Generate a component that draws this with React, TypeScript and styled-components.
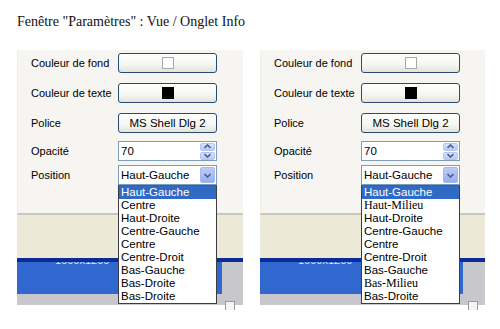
import React from "react";
import styled, { createGlobalStyle } from "styled-components";

const GlobalStyle = createGlobalStyle`
  html, body {
    margin: 0;
    padding: 0;
    background: #ffffff;
  }
  * {
    box-sizing: border-box;
  }
`;

const Page = styled.div`
  width: 500px;
  height: 329px;
  padding: 14px 0 0 17px;
  background: #ffffff;
  overflow: hidden;
`;

const Title = styled.div`
  font-family: "Liberation Serif", "Times New Roman", serif;
  font-size: 14px;
  line-height: 16px;
  color: #111;
  height: 16px;
  margin-bottom: 20px;
`;

const Panels = styled.div`
  display: flex;
  gap: 17px;
`;

const Panel = styled.div<{ $width: number }>`
  position: relative;
  width: ${({ $width }) => $width}px;
  display: flex;
  flex-direction: column;
  font-family: "Liberation Sans", Arial, sans-serif;
  font-size: 11px;
  color: #000;
`;

const Form = styled.div`
  height: 165px;
  padding: 3px 0 0 13px;
  background: #f6f5f1;
  border-left: 1px solid #eeede8;
  border-bottom: 2px solid #c9c7bd;
`;

const Row = styled.div<{ $after: number }>`
  display: flex;
  align-items: center;
  height: 20px;
  margin-bottom: ${({ $after }) => $after}px;
`;

const Label = styled.div`
  width: 87px;
  white-space: nowrap;
`;

const Control = styled.div`
  position: relative;
  width: 99px;
  height: 20px;
`;

const XpButton = styled.div`
  width: 100%;
  height: 100%;
  display: flex;
  align-items: center;
  justify-content: center;
  border: 1px solid #2a4a76;
  border-radius: 3px;
  background: linear-gradient(#ffffff 0%, #f5f5f1 60%, #e4e2d8 100%);
  font-size: 11.5px;
  color: #000;
`;

const Swatch = styled.span<{ $color: string; $edge: string }>`
  display: block;
  width: 12px;
  height: 12px;
  background: ${({ $color }) => $color};
  border: 1px solid ${({ $edge }) => $edge};
`;

const Field = styled.div`
  width: 100%;
  height: 100%;
  display: flex;
  align-items: center;
  justify-content: space-between;
  padding: 0 1px 0 2px;
  background: #ffffff;
  border: 1px solid #7f9db9;
  font-size: 11.5px;
`;

const SpinPair = styled.div`
  display: flex;
  flex-direction: column;
  gap: 1px;
`;

const ArrowButton = styled.div<{ $h: number }>`
  width: 15px;
  height: ${({ $h }) => $h}px;
  display: flex;
  align-items: center;
  justify-content: center;
  border: 1px solid #b3c6f3;
  border-radius: 2px;
  background: linear-gradient(#d6e1fc, #b7c9f7);
`;

const ComboButton = styled(ArrowButton)`
  background: linear-gradient(#bccbf8, #98aff0);
  border-color: #a6b8f0;
`;

const List = styled.div`
  position: absolute;
  top: 100%;
  left: 0;
  width: 100%;
  z-index: 5;
  background: #ffffff;
  border: 1px solid #3d3d3d;
  border-top-color: #5a5a5a;
`;

const Item = styled.div<{ $selected?: boolean; $serif?: boolean }>`
  height: 13px;
  line-height: 13px;
  padding-left: 2px;
  white-space: nowrap;
  font-family: ${({ $serif }) =>
    $serif ? `"Liberation Serif", "Times New Roman", serif` : `"Liberation Sans", Arial, sans-serif`};
  font-size: ${({ $serif }) => ($serif ? "12px" : "11.5px")};
  color: ${({ $selected }) => ($selected ? "#ffffff" : "#000000")};
  background: ${({ $selected }) => ($selected ? "#316ac5" : "transparent")};
`;

const Beige = styled.div`
  height: 43px;
  background: #ece9d8;
`;

const DarkLine = styled.div`
  height: 4px;
  background: #0b2c96;
`;

const Lower = styled.div`
  height: 43px;
  background: #c8c8cc;
`;

const BlueBox = styled.div<{ $width: number }>`
  width: ${({ $width }) => $width}px;
  height: 32px;
  overflow: hidden;
  background: #3168cf;
  padding-left: 38px;
`;

// resolution label, mostly hidden under the dark line as in the capture
const HiddenText = styled.div`
  margin-top: -8px;
  font-size: 11px;
  line-height: 12px;
  color: #dfe7f7;
`;

const Grip = styled.div<{ $right: number }>`
  position: absolute;
  right: ${({ $right }) => $right}px;
  bottom: -5px;
  width: 10px;
  height: 9px;
  background: #f4f4f4;
  border: 1px solid #9a9a9a;
  border-bottom: none;
`;

const Chevron = ({ up }: { up?: boolean }) => (
  <svg width="7" height="5" viewBox="0 0 7 5">
    <path
      d={up ? "M0.5 4 L3.5 1 L6.5 4" : "M0.5 1 L3.5 4 L6.5 1"}
      fill="none"
      stroke="#4d6185"
      strokeWidth="1.6"
    />
  </svg>
);

type Option = { text: string; serif?: boolean };

const leftOptions: Option[] = [
  { text: "Haut-Gauche" },
  { text: "Centre" },
  { text: "Haut-Droite" },
  { text: "Centre-Gauche" },
  { text: "Centre" },
  { text: "Centre-Droit" },
  { text: "Bas-Gauche" },
  { text: "Bas-Droite" },
  { text: "Bas-Droite" },
];

const rightOptions: Option[] = [
  { text: "Haut-Gauche" },
  { text: "Haut-Milieu", serif: true },
  { text: "Haut-Droite" },
  { text: "Centre-Gauche" },
  { text: "Centre" },
  { text: "Centre-Droit" },
  { text: "Bas-Gauche" },
  { text: "Bas-Milieu", serif: true },
  { text: "Bas-Droite" },
];

const SettingsPanel = ({
  width,
  blueWidth,
  gripRight,
  options,
}: {
  width: number;
  blueWidth: number;
  gripRight: number;
  options: Option[];
}) => (
  <Panel $width={width}>
    <Form>
      <Row $after={10}>
        <Label>Couleur de fond</Label>
        <Control>
          <XpButton>
            <Swatch $color="#ffffff" $edge="#a8a8a8" />
          </XpButton>
        </Control>
      </Row>
      <Row $after={10}>
        <Label>Couleur de texte</Label>
        <Control>
          <XpButton>
            <Swatch $color="#000000" $edge="#000000" />
          </XpButton>
        </Control>
      </Row>
      <Row $after={8}>
        <Label>Police</Label>
        <Control>
          <XpButton>MS Shell Dlg 2</XpButton>
        </Control>
      </Row>
      <Row $after={4}>
        <Label>Opacité</Label>
        <Control>
          <Field>
            <span>70</span>
            <SpinPair>
              <ArrowButton $h={8}>
                <Chevron up />
              </ArrowButton>
              <ArrowButton $h={8}>
                <Chevron />
              </ArrowButton>
            </SpinPair>
          </Field>
        </Control>
      </Row>
      <Row $after={0}>
        <Label>Position</Label>
        <Control>
          <Field>
            <span>Haut-Gauche</span>
            <ComboButton $h={16}>
              <Chevron />
            </ComboButton>
          </Field>
          <List>
            {options.map((o, i) => (
              <Item key={i} $selected={i === 0} $serif={o.serif}>
                {o.text}
              </Item>
            ))}
          </List>
        </Control>
      </Row>
    </Form>
    <Beige />
    <DarkLine />
    <Lower>
      <BlueBox $width={blueWidth}>
        <HiddenText>1600x1200</HiddenText>
      </BlueBox>
    </Lower>
    <Grip $right={gripRight} />
  </Panel>
);

export default function App() {
  return (
    <>
      <GlobalStyle />
      <Page>
        <Title>Fenêtre "Paramètres" : Vue / Onglet Info</Title>
        <Panels>
          <SettingsPanel width={226} blueWidth={205} gripRight={8} options={leftOptions} />
          <SettingsPanel width={225} blueWidth={203} gripRight={7} options={rightOptions} />
        </Panels>
      </Page>
    </>
  );
}
